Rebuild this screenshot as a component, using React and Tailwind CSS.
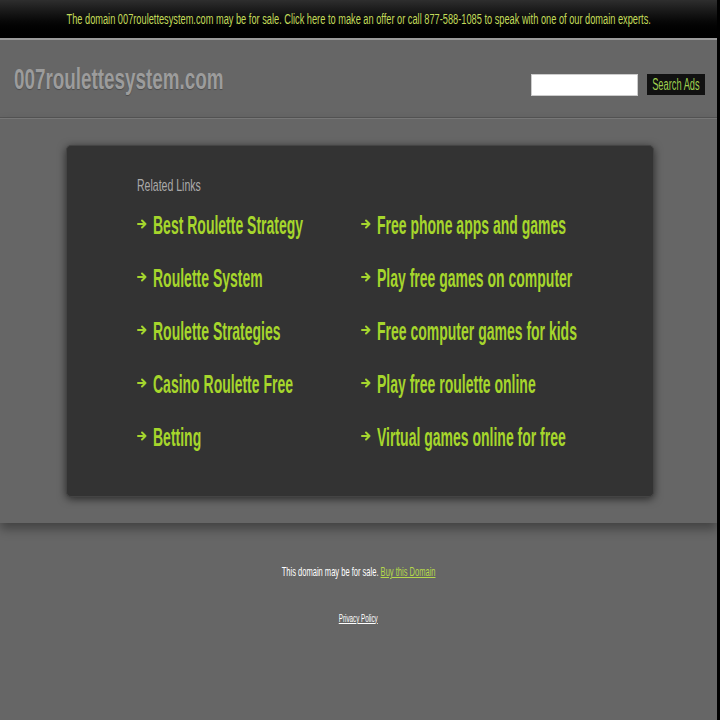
import React from "react";

const leftLinks = [
  "Best Roulette Strategy",
  "Roulette System",
  "Roulette Strategies",
  "Casino Roulette Free",
  "Betting",
];

const rightLinks = [
  "Free phone apps and games",
  "Play free games on computer",
  "Free computer games for kids",
  "Play free roulette online",
  "Virtual games online for free",
];

function Arrow() {
  return (
    <svg width="10" height="10" viewBox="0 0 10 10" className="shrink-0 mb-[3px]" fill="none" stroke="#a4d62e" strokeWidth="2" strokeLinecap="round" strokeLinejoin="round">
      <path d="M1 5h7.5M5 1.5 8.5 5 5 8.5" />
    </svg>
  );
}

// the screenshot is squeezed sideways, so text gets a horizontal squash
function LinkItem({ text }) {
  return (
    <li className="flex items-center h-[53px]">
      <span className="w-[16px] shrink-0 flex items-center">
        <Arrow />
      </span>
      <a
        href="#"
        className="inline-block shrink-0 text-[#a6d62c] text-[25px] font-bold leading-none whitespace-nowrap scale-x-[0.56] origin-left"
      >
        {text}
      </a>
    </li>
  );
}

export default function App() {
  return (
    <div className="min-h-[720px] bg-[#666] border-r-[3px] border-black font-['Liberation_Sans',Arial,sans-serif] overflow-hidden">
      {/* sale banner */}
      <div className="h-[40px] bg-gradient-to-b from-[#2e2e2e] to-black border-b-2 border-[#9a9a9a] flex items-center justify-center">
        <a href="#" className="inline-block whitespace-nowrap text-[#c3dc5a] text-[14px] scale-x-[0.66] origin-center">
          The domain 007roulettesystem.com may be for sale. Click here to make an offer or call 877-588-1085 to speak with one of our domain experts.
        </a>
      </div>

      {/* header */}
      <div className="h-[78px] flex items-center justify-between pl-[14px] pr-[12px] border-b border-[#555]">
        <h1 className="inline-block whitespace-nowrap text-[#9c9c9c] text-[29px] font-bold pt-[3px] scale-x-[0.65] origin-left [text-shadow:0_1px_1px_rgba(0,0,0,0.25)]">
          007roulettesystem.com
        </h1>
        <div className="flex items-center gap-[9px] pt-[12px]">
          <input type="text" className="w-[107px] h-[22px] bg-white border border-[#ccc]" />
          <button className="w-[58px] h-[21px] bg-[#111] flex items-center justify-center">
            <span className="inline-block whitespace-nowrap text-[#9fcf4f] text-[16px] leading-none scale-x-[0.58]">Search Ads</span>
          </button>
        </div>
      </div>

      {/* main */}
      <div className="pt-[26px] pb-[26px] border-t border-[#777] shadow-[0_6px_10px_rgba(0,0,0,0.35)] bg-[#666]">
        <div className="ml-[66px] w-[588px] h-[352px] bg-[#333] rounded-[5px] border border-[#444] shadow-[0_2px_8px_rgba(0,0,0,0.6)] pl-[70px] pt-[31px] overflow-hidden">
          <h2 className="block w-max whitespace-nowrap text-[#aaa] text-[17px] leading-none scale-x-[0.62] origin-left mb-[5px]">
            Related Links
          </h2>
          <div className="flex">
            <ul className="w-[224px] shrink-0">
              {leftLinks.map((t) => (
                <LinkItem key={t} text={t} />
              ))}
            </ul>
            <ul>
              {rightLinks.map((t) => (
                <LinkItem key={t} text={t} />
              ))}
            </ul>
          </div>
        </div>
      </div>

      {/* footer */}
      <div className="pt-[39px] flex flex-col items-center text-white">
        <p className="inline-block whitespace-nowrap text-[13px] scale-x-[0.58]">
          This domain may be for sale.{" "}
          <a href="#" className="text-[#b5d94a] underline">Buy this Domain</a>
        </p>
        <a href="#" className="inline-block whitespace-nowrap mt-[28px] underline text-[11px] scale-x-[0.57]">
          Privacy Policy
        </a>
      </div>
    </div>
  );
}
